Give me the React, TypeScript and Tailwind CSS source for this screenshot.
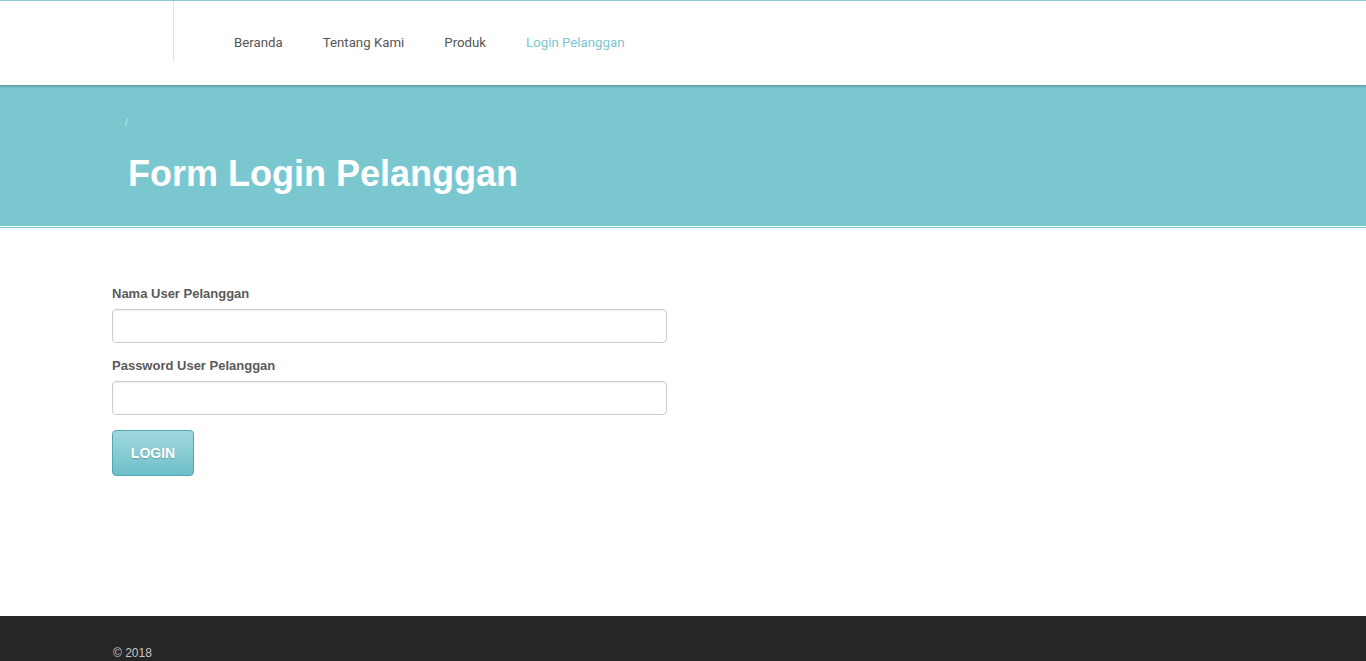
export default function App() {
  const nav = ["Beranda", "Tentang Kami", "Produk"];
  return (
    <div className="min-h-[661px] flex flex-col bg-white font-['Liberation_Sans',Arial,sans-serif]">
      <header className="relative z-10 h-[85px] border-t border-[#8cc9d0] bg-white shadow-[0_1px_3px_rgba(0,0,0,0.18)]">
        <div className="flex h-full items-start">
          <div className="ml-[173px] h-[60px] w-px bg-[#e2e2e2]" />
          <nav className="ml-[60px] flex gap-10 pt-[32px] font-['Roboto',sans-serif] text-[13.25px]">
            {nav.map((n) => (
              <a key={n} className="text-[#555]">
                {n}
              </a>
            ))}
            <a className="text-[#7bc6cf]">Login Pelanggan</a>
          </nav>
        </div>
      </header>

      <section className="h-[141px] bg-[#7bc7d0] shadow-[inset_0_3px_3px_-2px_rgba(0,0,0,0.15)]">
        <div className="pl-[125px] pt-[32px] text-[11px] leading-none text-[#b6e0e5]">/</div>
        <h1 className="pl-[128px] pt-[28px] text-[36px] font-bold leading-none text-white">Form Login Pelanggan</h1>
      </section>
      <div className="h-px bg-white" />
      <div className="h-px bg-[#7bc7d0]" />

      <main className="flex-1 pl-[112px] pt-[57px]">
        <form className="flex w-[555px] flex-col">
          <label className="text-[13px] font-bold leading-[18px] text-[#5a5a5a]">Nama User Pelanggan</label>
          <input
            type="text"
            className="mt-[6px] h-[34px] rounded border border-[#ccc] px-3 shadow-[inset_0_1px_1px_rgba(0,0,0,0.075)] outline-none"
          />
          <label className="mt-[14px] text-[13px] font-bold leading-[18px] text-[#5a5a5a]">Password User Pelanggan</label>
          <input
            type="password"
            className="mt-[6px] h-[34px] rounded border border-[#ccc] px-3 shadow-[inset_0_1px_1px_rgba(0,0,0,0.075)] outline-none"
          />
          <button
            type="button"
            className="mt-[15px] h-[46px] w-[82px] rounded border border-[#4ea9b3] bg-gradient-to-b from-[#a2d8de] to-[#6cbfc9] text-[14px] font-bold text-white [text-shadow:0_1px_1px_rgba(0,0,0,0.2)]"
          >
            LOGIN
          </button>
        </form>
      </main>

      <footer className="h-[45px] bg-[#262626] pl-[113px] pt-[31px] text-[12px] leading-none text-[#c8c8c8]">
        © 2018
      </footer>
    </div>
  );
}
